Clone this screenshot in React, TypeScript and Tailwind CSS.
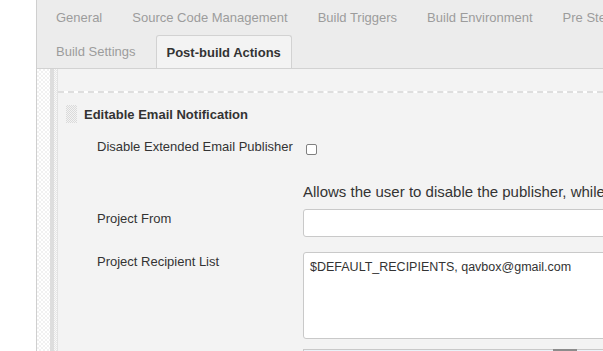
import React from 'react';

const TOP_TABS = ['General', 'Source Code Management', 'Build Triggers', 'Build Environment', 'Pre Steps'];

function Tab({ label, active }: { label: string; active?: boolean }) {
  if (active) {
    return (
      <div className="flex h-[33px] items-center rounded-t-[3px] border border-b-0 border-[#d2d2d2] bg-[#f3f3f3] px-[10px] pt-[1px] font-bold text-[#333]">
        {label}
      </div>
    );
  }
  return <div className="flex h-full items-center whitespace-nowrap px-[10px] text-[#9c9c9c]">{label}</div>;
}

function FormRow({ label, children }: { label: string; children: React.ReactNode }) {
  return (
    <div className="flex items-start">
      <div className="w-[245px] shrink-0 whitespace-nowrap pl-[39px] pt-[1px] text-[13px] leading-[17px] text-[#333]">{label}</div>
      <div className="min-w-0 flex-1">{children}</div>
    </div>
  );
}

export default function App() {
  return (
    <div className="flex h-[351px] w-[603px] overflow-hidden bg-white font-['Liberation_Sans',Arial,sans-serif] text-[13px]">
      <div className="w-[36px] shrink-0 bg-white" />
      <div className="flex min-w-0 flex-1 flex-col border-l border-[#cfcfcf]">
        {/* tab bar */}
        <div className="h-[69px] shrink-0 border-b border-[#d2d2d2] bg-[#ececec] pl-[9px]">
          <div className="flex h-[35px] gap-[10px] whitespace-nowrap">
            {TOP_TABS.map(t => (
              <Tab key={t} label={t} />
            ))}
          </div>
          <div className="flex h-[33px] gap-[10px] whitespace-nowrap">
            <Tab label="Build Settings" />
            <Tab label="Post-build Actions" active />
          </div>
        </div>

        <div className="flex min-h-0 flex-1">
          <div className="w-[13px] shrink-0 bg-[repeating-conic-gradient(#f1f1f1_0_25%,#ffffff_0_50%)] bg-[length:4px_4px]" />
          <div className="w-[4px] shrink-0 bg-[#dddddd]" />
          <div className="w-[3px] shrink-0 bg-[repeating-conic-gradient(#e6e6e6_0_25%,#f8f8f8_0_50%)] bg-[length:2px_2px]" />

          <div className="min-w-0 flex-1 overflow-hidden border-l border-[#e2e2e2] bg-[#f3f3f3]">
            <div className="h-[22px]" />
            <div className="h-[2px] border-t-2 border-dashed border-[#dedede] bg-white" />

            <div className="pl-[8px] pt-[12px]">
              <div className="flex items-center">
                <div className="h-[18px] w-[11px] bg-[repeating-conic-gradient(#dadada_0_25%,transparent_0_50%)] bg-[length:2px_2px]" />
                <div className="ml-[7px] text-[13px] font-bold leading-[17px] text-[#333]">Editable Email Notification</div>
              </div>
            </div>

            <div className="mt-[14px]">
              <FormRow label="Disable Extended Email Publisher">
                <div className="ml-[3px] mt-[7px] h-[11px] w-[11px] rounded-[2px] border border-[#808080] bg-white" />
              </FormRow>
            </div>

            <div className="mt-[28px] whitespace-nowrap pl-[245px] text-[15px] leading-[18px] text-[#333]">
              Allows the user to disable the publisher, while maintaining the settings
            </div>

            <div className="mt-[8px]">
              <FormRow label="Project From">
                <div className="h-[28px] w-[400px] rounded-[3px] border border-[#c9c9c9] bg-white" />
              </FormRow>
            </div>

            <div className="mt-[15px]">
              <FormRow label="Project Recipient List">
                <div className="h-[87px] w-[400px] whitespace-nowrap rounded-[3px] border border-[#c9c9c9] bg-white px-[6px] pt-[6px] text-[12.5px] leading-[16px] text-[#333]">
                  $DEFAULT_RECIPIENTS, qavbox@gmail.com
                </div>
              </FormRow>
            </div>

            <div className="mt-[10px] pl-[245px]">
              <div className="relative h-[20px] w-[400px] border-l border-t border-[#c9c9c9] bg-[#eaf2f8]">
                <div className="absolute left-[249px] top-[-1px] h-[3px] w-[24px] bg-[#8c8c8c]" />
              </div>
            </div>
          </div>
        </div>
      </div>
    </div>
  );
}
